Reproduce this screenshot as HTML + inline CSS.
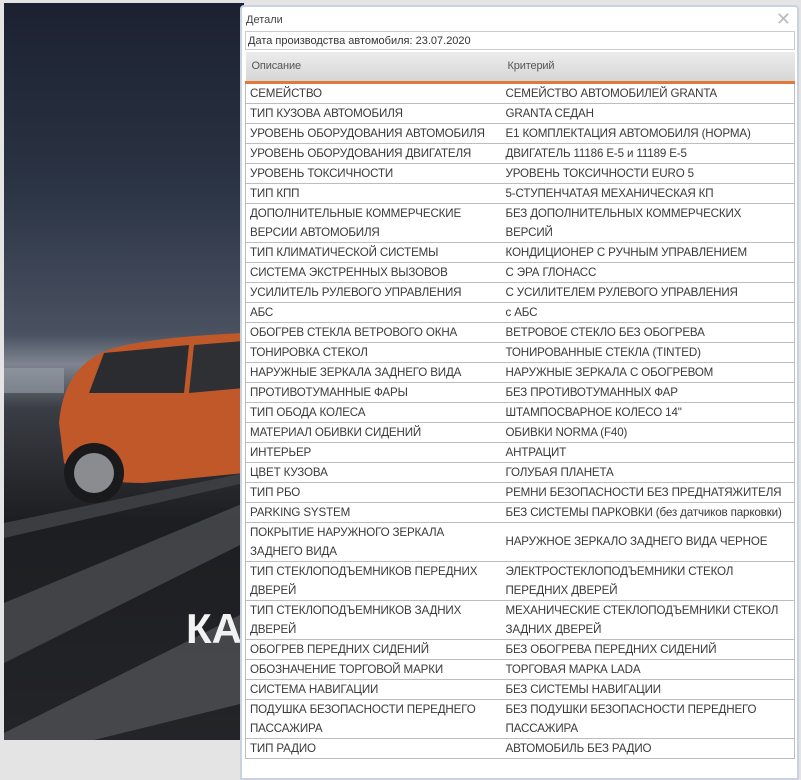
<!DOCTYPE html>
<html><head><meta charset="utf-8"><style>
*{margin:0;padding:0;box-sizing:border-box}
body{width:801px;height:777px;overflow:hidden;background:#e4e4e4;position:relative;font-family:"Liberation Sans","DejaVu Sans",sans-serif}
#bg{position:absolute;left:4px;top:3px;width:240px;height:737px;overflow:hidden;background:linear-gradient(180deg,#1b2130 0%,#2b3444 25%,#4a5262 45%,#7e8590 49%,#3a3d44 55%,#1d1e21 70%,#232427 100%)}
#dlg{position:absolute;left:240px;top:5px;width:559px;height:775px;background:#fff;border:2px solid #c9d2de;border-radius:4px 4px 0 0}
.title{position:absolute;left:4px;top:7px;font-size:11px;color:#444}
.x{position:absolute;right:6px;top:2px;font-size:18px;color:#bbb;font-weight:bold}
.date{position:absolute;left:3px;top:24px;width:550px;height:19px;border:1px solid #ccc;font-size:11px;color:#333;padding:3px 2px}
table{position:absolute;left:3px;top:45px;width:550px;border-collapse:collapse;font-size:11.6px;color:#3a3a3a;letter-spacing:-0.15px}
th{height:30px;text-align:left;font-weight:normal;color:#555;background:linear-gradient(#ececec,#d6d6d6);border-bottom:3px solid #e07a3c;padding-left:6px;font-size:11px}
td{border-top:1px solid #bdbdbd;border-bottom:1px solid #bdbdbd;padding:0 4px;line-height:19px;vertical-align:middle;white-space:nowrap}
td:first-child{width:256px;border-left:1px solid #bdbdbd}
td:last-child{border-right:1px solid #bdbdbd}
</style></head><body>
<div id="bg">
<svg width="240" height="737" style="position:absolute;left:0;top:0">
<polygon points="0,600 240,500 240,540 0,660" fill="#4a4c50" opacity=".8"/>
<polygon points="0,730 240,610 240,700 90,737 0,737" fill="#55575b" opacity=".7"/>
<polygon points="0,520 240,470 240,480 0,535" fill="#3c3d40"/>
<path d="M55,420 Q60,360 110,345 Q150,334 240,330 L240,470 L140,480 Q80,480 60,460 Z" fill="#c0582a"/>
<path d="M100,350 L185,342 L180,390 L85,390 Z" fill="#2a2c30"/>
<path d="M190,342 L240,338 L240,385 L185,390 Z" fill="#2e3034"/>
<circle cx="90" cy="470" r="30" fill="#1a1a1c"/><circle cx="90" cy="470" r="20" fill="#8a8c90"/>
<rect x="0" y="365" width="60" height="25" fill="#9aa0aa" opacity=".6"/>
<text x="182" y="640" font-family="Liberation Sans" font-weight="bold" font-size="42" fill="#f2f2f2">КА</text>
</svg>
</div>
<div id="dlg">
<div class="title">Детали</div><div class="x">✕</div>
<div class="date">Дата производства автомобиля: 23.07.2020</div>
<table>
<tr><th>Описание</th><th>Критерий</th></tr>
<tr><td>СЕМЕЙСТВО</td><td>СЕМЕЙСТВО АВТОМОБИЛЕЙ GRANTA</td></tr>
<tr><td>ТИП КУЗОВА АВТОМОБИЛЯ</td><td>GRANTA СЕДАН</td></tr>
<tr><td>УРОВЕНЬ ОБОРУДОВАНИЯ АВТОМОБИЛЯ</td><td>E1 КОМПЛЕКТАЦИЯ АВТОМОБИЛЯ (НОРМА)</td></tr>
<tr><td>УРОВЕНЬ ОБОРУДОВАНИЯ ДВИГАТЕЛЯ</td><td>ДВИГАТЕЛЬ 11186 Е-5 и 11189 Е-5</td></tr>
<tr><td>УРОВЕНЬ ТОКСИЧНОСТИ</td><td>УРОВЕНЬ ТОКСИЧНОСТИ EURO 5</td></tr>
<tr><td>ТИП КПП</td><td>5-СТУПЕНЧАТАЯ МЕХАНИЧЕСКАЯ КП</td></tr>
<tr><td>ДОПОЛНИТЕЛЬНЫЕ КОММЕРЧЕСКИЕ<br>ВЕРСИИ АВТОМОБИЛЯ</td><td>БЕЗ ДОПОЛНИТЕЛЬНЫХ КОММЕРЧЕСКИХ<br>ВЕРСИЙ</td></tr>
<tr><td>ТИП КЛИМАТИЧЕСКОЙ СИСТЕМЫ</td><td>КОНДИЦИОНЕР С РУЧНЫМ УПРАВЛЕНИЕМ</td></tr>
<tr><td>СИСТЕМА ЭКСТРЕННЫХ ВЫЗОВОВ</td><td>С ЭРА ГЛОНАСС</td></tr>
<tr><td>УСИЛИТЕЛЬ РУЛЕВОГО УПРАВЛЕНИЯ</td><td>С УСИЛИТЕЛЕМ РУЛЕВОГО УПРАВЛЕНИЯ</td></tr>
<tr><td>АБС</td><td>с АБС</td></tr>
<tr><td>ОБОГРЕВ СТЕКЛА ВЕТРОВОГО ОКНА</td><td>ВЕТРОВОЕ СТЕКЛО БЕЗ ОБОГРЕВА</td></tr>
<tr><td>ТОНИРОВКА СТЕКОЛ</td><td>ТОНИРОВАННЫЕ СТЕКЛА (TINTED)</td></tr>
<tr><td>НАРУЖНЫЕ ЗЕРКАЛА ЗАДНЕГО ВИДА</td><td>НАРУЖНЫЕ ЗЕРКАЛА С ОБОГРЕВОМ</td></tr>
<tr><td>ПРОТИВОТУМАННЫЕ ФАРЫ</td><td>БЕЗ ПРОТИВОТУМАННЫХ ФАР</td></tr>
<tr><td>ТИП ОБОДА КОЛЕСА</td><td>ШТАМПОСВАРНОЕ КОЛЕСО 14"</td></tr>
<tr><td>МАТЕРИАЛ ОБИВКИ СИДЕНИЙ</td><td>ОБИВКИ NORMA (F40)</td></tr>
<tr><td>ИНТЕРЬЕР</td><td>АНТРАЦИТ</td></tr>
<tr><td>ЦВЕТ КУЗОВА</td><td>ГОЛУБАЯ ПЛАНЕТА</td></tr>
<tr><td>ТИП РБО</td><td>РЕМНИ БЕЗОПАСНОСТИ БЕЗ ПРЕДНАТЯЖИТЕЛЯ</td></tr>
<tr><td>PARKING SYSTEM</td><td>БЕЗ СИСТЕМЫ ПАРКОВКИ (без датчиков парковки)</td></tr>
<tr><td>ПОКРЫТИЕ НАРУЖНОГО ЗЕРКАЛА<br>ЗАДНЕГО ВИДА</td><td>НАРУЖНОЕ ЗЕРКАЛО ЗАДНЕГО ВИДА ЧЕРНОЕ</td></tr>
<tr><td>ТИП СТЕКЛОПОДЪЕМНИКОВ ПЕРЕДНИХ<br>ДВЕРЕЙ</td><td>ЭЛЕКТРОСТЕКЛОПОДЪЕМНИКИ СТЕКОЛ<br>ПЕРЕДНИХ ДВЕРЕЙ</td></tr>
<tr><td>ТИП СТЕКЛОПОДЪЕМНИКОВ ЗАДНИХ<br>ДВЕРЕЙ</td><td>МЕХАНИЧЕСКИЕ СТЕКЛОПОДЪЕМНИКИ СТЕКОЛ<br>ЗАДНИХ ДВЕРЕЙ</td></tr>
<tr><td>ОБОГРЕВ ПЕРЕДНИХ СИДЕНИЙ</td><td>БЕЗ ОБОГРЕВА ПЕРЕДНИХ СИДЕНИЙ</td></tr>
<tr><td>ОБОЗНАЧЕНИЕ ТОРГОВОЙ МАРКИ</td><td>ТОРГОВАЯ МАРКА LADA</td></tr>
<tr><td>СИСТЕМА НАВИГАЦИИ</td><td>БЕЗ СИСТЕМЫ НАВИГАЦИИ</td></tr>
<tr><td>ПОДУШКА БЕЗОПАСНОСТИ ПЕРЕДНЕГО<br>ПАССАЖИРА</td><td>БЕЗ ПОДУШКИ БЕЗОПАСНОСТИ ПЕРЕДНЕГО<br>ПАССАЖИРА</td></tr>
<tr><td>ТИП РАДИО</td><td>АВТОМОБИЛЬ БЕЗ РАДИО</td></tr>
</table>
</div>
</body></html>
